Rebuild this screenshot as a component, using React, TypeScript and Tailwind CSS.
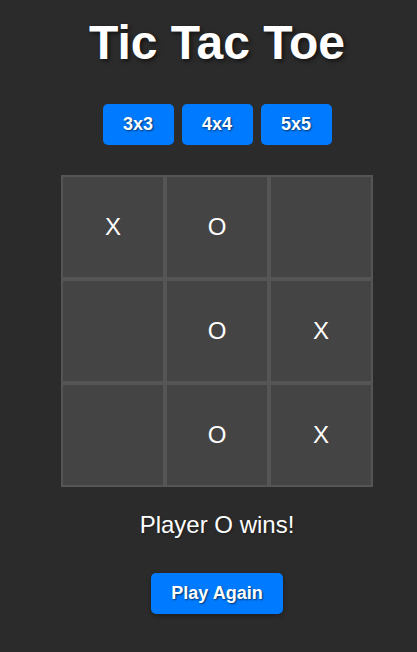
import React from "react";

const board = ["X", "O", "", "", "O", "X", "", "O", "X"];

export default function App() {
  return (
    <div
      className="min-h-[652px] w-full bg-[#2b2b2b] text-white flex flex-col items-center pl-[17px]"
      style={{ fontFamily: '"Liberation Sans", Arial, sans-serif' }}
    >
      <h1 className="mt-[15px] text-[48px] leading-[55px] font-bold [text-shadow:2px_2px_4px_rgba(0,0,0,0.6)]">
        Tic Tac Toe
      </h1>
      <div className="mt-[34px] flex gap-[8px]">
        {["3x3", "4x4", "5x5"].map((s) => (
          <button
            key={s}
            className="w-[71px] h-[41px] bg-[#007bff] rounded-[5px] text-[18px] font-bold text-white [text-shadow:1px_1px_2px_rgba(0,0,0,0.6)]"
          >
            {s}
          </button>
        ))}
      </div>
      <div className="mt-[30px] grid grid-cols-[repeat(3,104px)]">
        {board.map((c, i) => (
          <div
            key={i}
            className="w-[104px] h-[104px] border-2 border-[#555555] bg-[#444444] flex items-center justify-center text-[24px]"
          >
            {c}
          </div>
        ))}
      </div>
      <div className="mt-[24px] text-[24px] leading-[28px] [text-shadow:1px_1px_2px_rgba(0,0,0,0.3)]">
        Player O wins!
      </div>
      <button className="mt-[34px] w-[132px] h-[41px] bg-[#007bff] rounded-[5px] text-[18px] font-bold text-white shadow-[0_2px_5px_rgba(0,0,0,0.3)] [text-shadow:1px_1px_2px_rgba(0,0,0,0.6)]">
        Play Again
      </button>
    </div>
  );
}
